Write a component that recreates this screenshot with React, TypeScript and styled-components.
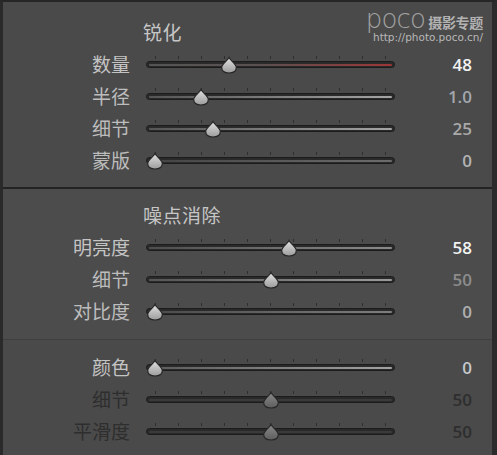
import React from "react";
import styled, { createGlobalStyle } from "styled-components";

const Global = createGlobalStyle`
  html, body { margin: 0; padding: 0; background: #4a4a4a; }
  body { width: 497px; height: 455px; overflow: hidden; }
`;

const CJK = `"Noto Sans CJK SC", "Microsoft YaHei", sans-serif`;

const Frame = styled.div`
  position: relative;
  width: 497px;
  height: 455px;
  box-sizing: border-box;
  background: #4a4a4a;
  border-top: 2px solid #262626;
  border-left: 3px solid #2a2a2a;
  border-right: 5px solid #2b2b2b;
  font-family: ${CJK};
  overflow: hidden;
`;

const Section = styled.section<{ $pt: number; $pb: number; $bg: string }>`
  display: flex;
  flex-direction: column;
  padding-top: ${(p) => p.$pt}px;
  padding-bottom: ${(p) => p.$pb}px;
  background: ${(p) => p.$bg};
`;

const HardDivider = styled.div`
  height: 2px;
  background: #232323;
`;

const SoftDivider = styled.div`
  height: 1px;
  background: #3f3f3f;
`;

const Title = styled.div`
  height: 24px;
  line-height: 24px;
  margin-left: 140px;
  margin-bottom: 5px;
  font-size: 19px;
  color: #c6c6c6;
  letter-spacing: 0.5px;
`;

const Row = styled.div`
  display: grid;
  grid-template-columns: 127px 249px 60px;
  column-gap: 16px;
  height: 32px;
  align-items: center;
`;

const Label = styled.div<{ $c: string }>`
  text-align: right;
  font-size: 19px;
  line-height: 32px;
  color: ${(p) => p.$c};
  margin-top: -2px;
`;

const Value = styled.div<{ $c: string }>`
  text-align: right;
  font-family: "Open Sans", "Noto Sans", sans-serif;
  font-weight: 600;
  font-size: 17px;
  line-height: 32px;
  color: ${(p) => p.$c};
  margin-right: -1px;
`;

const TrackArea = styled.div`
  position: relative;
  height: 32px;
`;

const Ticks = styled.div`
  position: absolute;
  top: 7px;
  left: 9px;
  width: 231px;
  height: 3px;
  display: flex;
  justify-content: space-between;
`;

const Tick = styled.span`
  width: 1px;
  height: 3px;
  background: #2e2e2e;
`;

const Track = styled.div<{ $fill: string }>`
  position: absolute;
  left: 0;
  right: 0;
  top: 12px;
  height: 7px;
  box-sizing: border-box;
  border-radius: 4px;
  background: #2a2a2a;
  border: 1px solid #1c1c1c;
  &::after {
    content: "";
    position: absolute;
    left: 2px;
    right: 2px;
    top: 2px;
    height: 2px;
    border-radius: 1px;
    background: ${(p) => p.$fill};
  }
`;

const ThumbBox = styled.div`
  position: absolute;
  top: 6px;
  width: 18px;
  height: 18px;
  margin-left: -9px;
`;

const Watermark = styled.div`
  position: absolute;
  right: 9px;
  top: 5px;
  display: flex;
  flex-direction: column;
  align-items: flex-end;
  pointer-events: none;
`;

const WmTop = styled.div`
  display: flex;
  align-items: flex-end;
  gap: 3px;
  height: 24px;
`;

const Poco = styled.span`
  font-family: "DejaVu Sans", sans-serif;
  font-weight: 300;
  font-size: 26px;
  line-height: 24px;
  letter-spacing: -0.8px;
  color: #a3a3a3;
`;

const WmCn = styled.span`
  font-family: ${CJK};
  font-weight: 700;
  font-size: 14px;
  line-height: 18px;
  color: #b2b2b2;
  letter-spacing: -0.3px;
`;

const WmUrl = styled.span`
  font-family: "DejaVu Sans", sans-serif;
  font-size: 10.5px;
  line-height: 11px;
  color: #b8b8b8;
  margin-top: 1px;
`;

type RowData = {
  label: string;
  value: string;
  pct: number;
  labelColor: string;
  valueColor: string;
  fill: string;
  disabled?: boolean;
};

const Thumb: React.FC<{ disabled?: boolean; id: string }> = ({ disabled, id }) => (
  <svg width="18" height="18" viewBox="0 0 18 18">
    <defs>
      <linearGradient id={id} x1="0" y1="0" x2="0" y2="1">
        <stop offset="0" stopColor={disabled ? "#8a8a8a" : "#e2e2e2"} />
        <stop offset="1" stopColor={disabled ? "#5e5e5e" : "#9c9c9c"} />
      </linearGradient>
    </defs>
    <path
      d="M9 1.5 C10.5 5 16.3 7.6 16.3 11.6 C16.3 15 13.2 17 9 17 C4.8 17 1.7 15 1.7 11.6 C1.7 7.6 7.5 5 9 1.5 Z"
      fill={`url(#${id})`}
      stroke="#262626"
      strokeWidth="1.2"
    />
  </svg>
);

const Slider: React.FC<{ row: RowData; id: string }> = ({ row, id }) => (
  <Row>
    <Label $c={row.labelColor}>{row.label}</Label>
    <TrackArea>
      <Ticks>
        {Array.from({ length: 11 }).map((_, i) => (
          <Tick key={i} />
        ))}
      </Ticks>
      <Track $fill={row.fill} />
      <ThumbBox style={{ left: 9 + row.pct * 231 }}>
        <Thumb id={id} disabled={row.disabled} />
      </ThumbBox>
    </TrackArea>
    <Value $c={row.valueColor}>{row.value}</Value>
  </Row>
);

const sharpen: RowData[] = [
  { label: "数量", value: "48", pct: 48 / 150, labelColor: "#c4c4c4", valueColor: "#f2f2f2", fill: "linear-gradient(to right, #555 0%, #5a5050 45%, #9c3636 100%)" },
  { label: "半径", value: "1.0", pct: 0.2, labelColor: "#bdbdbd", valueColor: "#a2a7ad", fill: "linear-gradient(to right, #555, #a4a4a4)" },
  { label: "细节", value: "25", pct: 0.25, labelColor: "#bdbdbd", valueColor: "#a9a9a9", fill: "linear-gradient(to right, #555, #a4a4a4)" },
  { label: "蒙版", value: "0", pct: 0, labelColor: "#bdbdbd", valueColor: "#b3b3b3", fill: "linear-gradient(to right, #444, #6c6c6c)" },
];

const noise: RowData[] = [
  { label: "明亮度", value: "58", pct: 0.58, labelColor: "#c4c4c4", valueColor: "#f2f2f2", fill: "linear-gradient(to right, #4e4e4e, #8a8a8a)" },
  { label: "细节", value: "50", pct: 0.5, labelColor: "#bdbdbd", valueColor: "#8c8c8c", fill: "linear-gradient(to right, #555, #9a9a9a)" },
  { label: "对比度", value: "0", pct: 0, labelColor: "#bdbdbd", valueColor: "#b0b0b0", fill: "linear-gradient(to right, #4a4a4a, #7e7e7e)" },
];

const color: RowData[] = [
  { label: "颜色", value: "0", pct: 0, labelColor: "#c4c4c4", valueColor: "#c4c8cc", fill: "linear-gradient(to right, #5a5a5a, #a2a2a2)" },
  { label: "细节", value: "50", pct: 0.5, labelColor: "#2e2e2e", valueColor: "#2e2e2e", fill: "#3a3a3a", disabled: true },
  { label: "平滑度", value: "50", pct: 0.5, labelColor: "#2e2e2e", valueColor: "#2e2e2e", fill: "#3a3a3a", disabled: true },
];

export default function App() {
  return (
    <>
      <Global />
      <Frame>
        <Section $pt={18} $pb={10} $bg="#4a4a4a">
          <Title>锐化</Title>
          {sharpen.map((r, i) => (
            <Slider key={i} row={r} id={`s${i}`} />
          ))}
        </Section>
        <HardDivider />
        <Section $pt={14} $pb={11} $bg="#4c4c4c">
          <Title>噪点消除</Title>
          {noise.map((r, i) => (
            <Slider key={i} row={r} id={`n${i}`} />
          ))}
        </Section>
        <SoftDivider />
        <Section $pt={12} $pb={8} $bg="#4a4a4a">
          {color.map((r, i) => (
            <Slider key={i} row={r} id={`c${i}`} />
          ))}
        </Section>
        <Watermark>
          <WmTop>
            <Poco>poco</Poco>
            <WmCn>摄影专题</WmCn>
          </WmTop>
          <WmUrl>http://photo.poco.cn/</WmUrl>
        </Watermark>
      </Frame>
    </>
  );
}
